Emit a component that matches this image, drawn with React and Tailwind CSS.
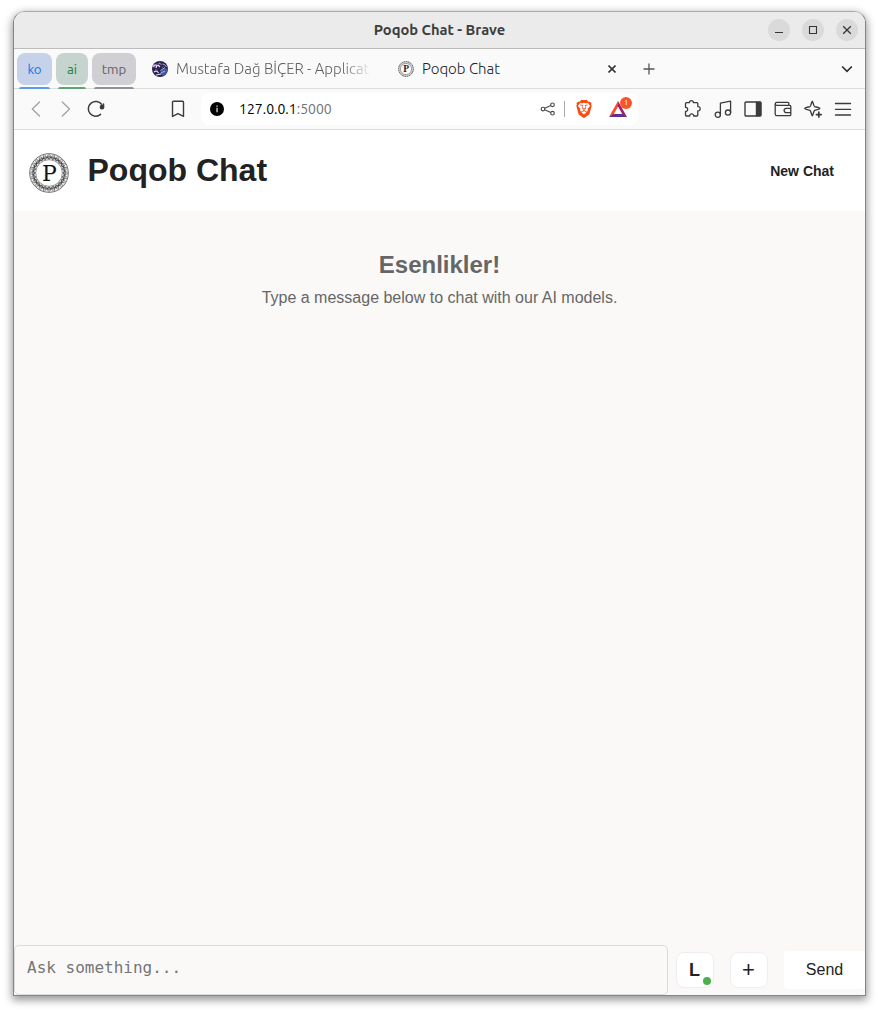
import React from "react";
import { SiBrave } from "react-icons/si";

const UI = "font-['Ubuntu','Noto_Sans',sans-serif]";

function Seal({ size }) {
  const beads = Array.from({ length: 24 }, (_, i) => i * 15);
  return (
    <svg width={size} height={size} viewBox="0 0 42 42" fill="none" className="block shrink-0">
      <circle cx="21" cy="21" r="17" stroke="#f1f1f1" strokeWidth="6.5" />
      <circle cx="21" cy="21" r="20.3" stroke="#4a4a4a" strokeWidth="0.8" />
      <circle cx="21" cy="21" r="14" stroke="#666" strokeWidth="0.7" />
      {beads.map((a) => (
        <g key={a} transform={"rotate(" + a + " 21 21)"} stroke="#3f3f3f" strokeWidth="0.6">
          <path d="M16.5 2 Q21 9.5 25.5 2 M17 7 Q21 0 25 7 M19.5 4.5 L22.5 4.5" />
        </g>
      ))}
      <text x="21.3" y="28.9" textAnchor="middle" fontSize="24" fill="#111" fontFamily="DejaVu Serif, serif" textLength="15.5" lengthAdjust="spacingAndGlyphs">P</text>
    </svg>
  );
}

function SmallSeal() {
  return (
    <svg width="16" height="16" viewBox="0 0 16 16" fill="none" className="block shrink-0">
      <circle cx="8" cy="8" r="6.6" stroke="#cfcfcf" strokeWidth="2.2" />
      <circle cx="8" cy="8" r="7.4" stroke="#555" strokeWidth="0.9" strokeDasharray="1.6 0.7" />
      <circle cx="8" cy="8" r="5.6" stroke="#888" strokeWidth="0.7" />
      <text x="8.1" y="11.2" textAnchor="middle" fontSize="9.5" fontWeight="bold" fill="#222" fontFamily="Liberation Serif, serif">P</text>
    </svg>
  );
}

function Galaxy() {
  return (
    <svg width="16" height="16" viewBox="0 0 16 16" fill="none" className="block shrink-0">
      <circle cx="8" cy="8" r="8" fill="#29204f" />
      <path d="M1 5 Q5 1 9 1.5 L6 5 L2 7z" fill="#5a3a80" />
      <path d="M9 9 Q13 6 15.8 8 Q15 13 11 15 L8 13z" fill="#4555a8" />
      <path d="M1 6 Q3 3 5 4.5 L4 7 M6 4 L8 6 M2 11 Q5 9 6.5 12 M4 14 L9 13" stroke="#e2e4f4" strokeWidth="1.2" />
      <path d="M7 2 L9.5 3.5 M10.5 3 Q13 3 14.5 6 M8.5 9.5 L13 6.5 M9 12 L13 10" stroke="#a9b4df" strokeWidth="1" />
      <path d="M3 8.5 L6 9.5 M10 7 L11.5 5" stroke="#b35b6b" strokeWidth="0.8" />
    </svg>
  );
}

function Icon({ children, color = "#3b3b3d", sw = 1.4 }) {
  return (
    <div className="flex w-[30px] h-[30px] shrink-0 items-center justify-center">
      <svg width="20" height="20" viewBox="0 0 20 20" fill="none" stroke={color} strokeWidth={sw} strokeLinecap="round" strokeLinejoin="round" className="block">
        {children}
      </svg>
    </div>
  );
}

function WindowButton({ children }) {
  return (
    <div className="flex size-[22px] items-center justify-center rounded-full bg-[#dadada]">
      <svg width="12" height="12" viewBox="0 0 12 12" fill="none" stroke="#363636" className="block">{children}</svg>
    </div>
  );
}

function TitleBar() {
  return (
    <div className={"grid h-[37px] shrink-0 grid-cols-[1fr_auto_1fr] items-center border-b border-[#bcbcbc] bg-[#ebebeb] pr-[7px] " + UI}>
      <div />
      <div className="pl-[7px] text-[14.7px] font-semibold leading-5 text-[#3d3d3d]">Poqob Chat - Brave</div>
      <div className="flex justify-end gap-3">
        <WindowButton><path d="M2 8.5h8" strokeWidth="1.1" /></WindowButton>
        <WindowButton><path d="M2.5 2.5h7v7h-7z" strokeWidth="1.1" /></WindowButton>
        <WindowButton><path d="M2.2 2.2l7.6 7.6M9.8 2.2l-7.6 7.6" strokeWidth="1.3" /></WindowButton>
      </div>
    </div>
  );
}

function Group({ label, width, chip, bar }) {
  return (
    <div className={"flex h-9 flex-col justify-between " + width}>
      <div className={"flex h-8 items-center justify-center rounded-lg pt-px text-[13.3px] " + chip}>{label}</div>
      <div className={"mx-0.5 h-0.5 shrink-0 rounded-t-sm " + bar} />
    </div>
  );
}

function TabStrip() {
  return (
    <div className={"flex h-10 shrink-0 border-b border-[#dcdcdd] bg-[#fafafa] pl-[3px] pt-1 " + UI}>
      <div className="flex gap-1">
        <Group label="ko" width="w-[35px]" chip="bg-[#c5d2e9] text-[#1a73e8]" bar="bg-[#5f9aec]" />
        <Group label="ai" width="w-8" chip="bg-[#c5d4cf] text-[#188038]" bar="bg-[#5da777]" />
        <Group label="tmp" width="w-11" chip="bg-[#cfcfd4] text-[#5f6368]" bar="bg-[#929096]" />
      </div>
      <div className="flex h-8 w-[236px] items-center pl-4">
        <Galaxy />
        <div className="ml-2 w-[198px] whitespace-nowrap text-[15px] font-light text-[#606063] [mask-image:linear-gradient(to_right,black_85%,transparent)]">Mustafa Dağ BİÇER - Applicat</div>
      </div>
      <div className="flex h-8 w-[246px] items-center pl-[26px]">
        <SmallSeal />
        <div className="ml-2 flex-1 whitespace-nowrap text-[15px] font-light text-[#202023]">Poqob Chat</div>
        <svg width="8" height="8" viewBox="0 0 8 8" fill="none" stroke="#37373a" strokeWidth="1.6" className="mr-0.5 block"><path d="M.5.5l7 7M7.5.5l-7 7" /></svg>
      </div>
      <div className="flex h-8 flex-1 items-center justify-between pl-[25px] pr-3">
        <svg width="12" height="12" viewBox="0 0 12 12" fill="none" stroke="#555" strokeWidth="1.3" className="block"><path d="M6 .5v11M.5 6h11" /></svg>
        <svg width="12" height="8" viewBox="0 0 12 8" fill="none" stroke="#2f2f31" strokeWidth="1.7" className="block"><path d="M1.2 1.5L6 6.3l4.8-4.8" /></svg>
      </div>
    </div>
  );
}

function AddressBar() {
  return (
    <div className="ml-2 flex h-8 w-[437px] items-center rounded-lg bg-white pl-[9px]">
      <svg width="14" height="14" viewBox="0 0 14 14" className="block"><circle cx="7" cy="7" r="7" fill="#000" /><path d="M6.4 3.4h1.3v1.3H6.4zM6.4 5.8h1.3v4.5H6.4z" fill="#ddd" /></svg>
      <div className="ml-[15px] flex-1 text-[14px] text-black">127.0.0.1<span className="text-[#707073]">:5000</span></div>
      <svg width="16" height="16" viewBox="0 0 16 16" fill="none" stroke="#4a4a4d" strokeWidth="1.15" className="block">
        <circle cx="3" cy="8" r="1.8" /><circle cx="12.5" cy="3.8" r="1.8" /><circle cx="12.5" cy="12.2" r="1.8" /><path d="M4.7 7.2l6.1-2.7M4.7 8.8l6.1 2.7" />
      </svg>
      <div className="ml-2 h-4 w-px bg-[#a9a9ab]" />
      <SiBrave size={18} color="#fb4b13" className="ml-[10px] block" />
      <div className="relative ml-4 mr-[11px] h-[18px] w-[18px]">
        <svg width="18" height="18" viewBox="0 0 18 18" fill="none" className="block">
          <path d="M9 1L0 17l4.5-2.5L9 6.5z" fill="#ff4724" />
          <path d="M9 1l9 16-4.5-2.5L9 6.5z" fill="#9e1f63" />
          <path d="M0 17h18l-4.5-3h-9z" fill="#662d91" />
        </svg>
        <div className="absolute -top-[3px] left-[11px] flex size-3 items-center justify-center rounded-full bg-[#fb542b] text-[8px] leading-none text-white">1</div>
      </div>
    </div>
  );
}

function Toolbar() {
  return (
    <div className={"flex h-[41px] shrink-0 items-center border-b border-[#dcdcdd] bg-[#fafafa] pl-[7px] pr-[7px] " + UI}>
      <Icon color="#a4a4a6"><path d="M13.5 3L6.3 10l7.2 7" /></Icon>
      <Icon color="#a4a4a6"><path d="M6.3 3L13.5 10l-7.2 7" /></Icon>
      <Icon sw={1.5}><path d="M15.6 5.3A7.4 7.4 0 1 0 14.6 15.4" /><circle cx="16" cy="8.2" r="1.6" fill="#3b3b3d" /><path d="M17.5 5v3" /></Icon>
      <div className="ml-[52px]"><Icon><path d="M4.5 3.2a1 1 0 0 1 1-1h9a1 1 0 0 1 1 1v14.2L10 14.6l-5.5 2.8z" /></Icon></div>
      <AddressBar />
      <div className="ml-auto flex">
        <Icon sw={1.3}><path transform="translate(-.8 0)" d="M4.3 3.7H7.2C6.8 1 11.6 1 11.2 3.7H14.6a1 1 0 0 1 1 1V7.6c3.2-.6 3.2 4.8 0 4.3V16a1 1 0 0 1-1 1h-3.1c.2-2.9-4.2-2.9-4 0H4.3a1 1 0 0 1-1-1v-3.5c2.9.2 2.9-4.3 0-4.1V4.7a1 1 0 0 1 1-1z" /></Icon>
        <Icon sw={1.3}><circle cx="4.8" cy="15.7" r="2.6" /><circle cx="15" cy="13.6" r="2.6" /><path d="M7.4 15.7V4.2l10.2-2v11.4" /></Icon>
        <Icon><rect x="2" y="3" width="16" height="14" rx="1" /><path d="M13.5 3.5H17.5v13H13.5z" fill="#3b3b3d" /></Icon>
        <Icon sw={1.3}><path d="M15.8 6V4.3a1 1 0 0 0-1-1H3.8a1.5 1.5 0 0 0 0 3h13a1 1 0 0 1 1 1v8.4a1 1 0 0 1-1 1h-13a1.6 1.6 0 0 1-1.6-1.6V4.8M17.8 9.3h-4.5a2.2 2.2 0 0 0 0 4.4h4.5" /></Icon>
        <Icon sw={1.35}><path d="M9.3 2.2C10 2.2 10.6 7.4 11.6 7.6c1 .4 5.2 1 5.2 1.9s-4.2 1.5-5.2 2c-1 .4-1.6 5.2-2.3 5.2s-1.3-4.8-2.3-5.2c-1-.5-5.2-1.1-5.2-2s4.2-1.5 5.2-1.9c1-.2 1.6-5.4 2.3-5.4z" /><path d="M15.8 13.2v4.8M13.4 15.6h4.8" strokeWidth="1.7" /></Icon>
        <Icon sw={1.4}><path d="M2.5 4.5h15M2.5 10.4h15M2.5 16h15" /></Icon>
      </div>
    </div>
  );
}

function Chat() {
  return (
    <div className="flex min-h-0 flex-1 flex-col bg-[#faf9f8] font-['Liberation_Sans',Arial,sans-serif] text-[#222]">
      <header className="flex h-[81px] shrink-0 items-center bg-white pl-[15px] pr-[31px]">
        <div className="mt-[5px]"><Seal size={40} /></div>
        <h1 className="-mt-px ml-[18.5px] text-[32px] font-bold leading-9">Poqob Chat</h1>
        <button className="ml-auto mt-px text-[14px] font-bold leading-5">New Chat</button>
      </header>
      <main className="flex-1 pt-10 text-center text-[#666]">
        <h2 className="text-2xl font-bold leading-7">Esenlikler!</h2>
        <p className="mt-2 text-base leading-[22px]">Type a message below to chat with our AI models.</p>
      </main>
      <footer className="flex h-[50px] shrink-0 items-center">
        <textarea placeholder="Ask something..." className="h-[50px] w-[654px] shrink-0 resize-none rounded-[5px] border border-[#dddcdb] bg-transparent px-3 py-[11px] font-['DejaVu_Sans_Mono',monospace] text-base leading-[22px] outline-none placeholder:text-[#757575]" />
        <button className="relative ml-2 h-9 w-[38px] shrink-0 rounded-lg border border-[#eeeef2] bg-white pr-px text-[18px] font-bold">
          L<span className="absolute bottom-[2px] right-[2px] size-2 rounded-full bg-[#4caf50]" />
        </button>
        <button className="ml-4 h-9 w-[38px] shrink-0 rounded-lg border border-[#eeeef2] bg-white pr-px text-[22px] leading-none">+</button>
        <button className="ml-4 h-[38px] flex-1 rounded bg-white text-base">Send</button>
      </footer>
    </div>
  );
}

export default function App() {
  return (
    <div className="h-[1012px] w-[879px] overflow-hidden bg-white pl-[13px] pt-[11px]">
      <div className="flex h-[985px] w-[853px] flex-col overflow-hidden rounded-t-xl border border-[#858585] border-t-[#aaa] shadow-[0_3px_8px_1px_rgba(0,0,0,0.42)]">
        <TitleBar />
        <TabStrip />
        <Toolbar />
        <Chat />
      </div>
    </div>
  );
}
